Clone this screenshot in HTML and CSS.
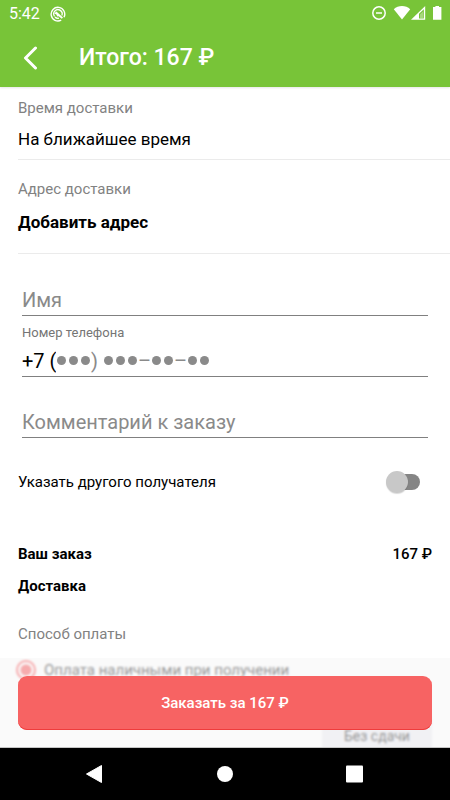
FILE: index.html
```html
<!DOCTYPE html>
<html lang="ru">
<head>
<meta charset="utf-8">
<meta name="viewport" content="width=device-width, initial-scale=1">
<title>Оформление заказа</title>
<link rel="stylesheet" href="styles.css">
</head>
<body>
<header class="top">
  <div class="status">
    <span class="clock">5:42</span>
    <svg class="status-app" width="16" height="16" viewBox="0 0 16 16" aria-hidden="true">
      <path d="M11.200 14.100A6.800 6.800 0 1 1 14 11.200" fill="none" stroke="#fff" stroke-width="1.400"/>
      <path d="M4.600 10.400A4.200 4.200 0 1 1 11.800 9.600" fill="none" stroke="#fff" stroke-width="1.300"/>
      <path d="M4.200 7.600 6.400 5.600 13 11.400 11.800 12.800 8.600 10.200 7.200 10.400 6.400 8.600z" fill="#fff"/>
      <path d="M5 11a4.200 4.200 0 0 0 4 1.200" fill="none" stroke="#fff" stroke-width="1.300"/>
    </svg>
    <svg class="status-system" width="71" height="16" viewBox="0 0 71 16" aria-hidden="true">
      <circle cx="8" cy="7" r="6.200" fill="none" stroke="#fff" stroke-width="1.500"/>
      <path d="M5 7h6" stroke="#fff" stroke-width="1.500"/>
      <path d="M22.800 3.200C27-1 35-1 39.200 3.200L31 13.400z" fill="#fff"/>
      <path d="M40 13.800 54.200 0v13.800z" fill="#fff"/>
      <path d="M48 7.800 52.800 3.200v9.200H48z" fill="#78c438"/>
      <path d="M49 8.200 52 5.400v6.800h-3z" fill="#fff" fill-opacity=".35"/>
      <path d="M62 1h2.400V0h3.600v1h2.400v12.800H62z" fill="#fff"/>
    </svg>
  </div>
  <div class="toolbar">
    <button class="back" type="button" aria-label="Назад">
      <svg width="16" height="24" viewBox="0 0 16 24" aria-hidden="true"><path d="M13.500 2 3.500 12l10 10" fill="none" stroke="#fff" stroke-width="3" stroke-linecap="round" stroke-linejoin="round"/></svg>
    </button>
    <h1 class="title">Итого: 167 ₽</h1>
  </div>
</header>

<form class="checkout">
  <main class="content">
    <section class="block block-time">
      <h2 class="caption">Время доставки</h2>
      <p class="value">На ближайшее время</p>
    </section>
    <section class="block block-address">
      <h2 class="caption">Адрес доставки</h2>
      <a class="value value-strong" href="#address">Добавить адрес</a>
    </section>

    <section class="fields">
      <div class="field">
        <input class="input" type="text" placeholder="Имя" aria-label="Имя">
      </div>
      <div class="field">
        <label class="field-label" for="phone">Номер телефона</label>
        <div class="input phone">
          <input class="phone-input" id="phone" type="tel" value="+7 (">
          <span class="mask"><span class="dots"><i></i><i></i><i></i></span>)<span class="dots dots-next"><i></i><i></i><i></i></span>–<span class="dots"><i></i><i></i></span>–<span class="dots"><i></i><i></i></span></span>
        </div>
      </div>
      <div class="field">
        <input class="input" type="text" placeholder="Комментарий к заказу" aria-label="Комментарий к заказу">
      </div>
    </section>

    <div class="recipient">
      <label for="recipient">Указать другого получателя</label>
      <input class="switch" id="recipient" type="checkbox" role="switch">
    </div>

    <dl class="summary">
      <div class="summary-row"><dt>Ваш заказ</dt><dd>167 ₽</dd></div>
      <div class="summary-row"><dt>Доставка</dt><dd></dd></div>
    </dl>

    <section class="payment">
      <h2 class="caption">Способ оплаты</h2>
      <label class="option"><input class="radio" type="radio" name="payment" checked>Оплата наличными при получении</label>
      <button class="chip" type="button">Без сдачи</button>
    </section>
  </main>
  <div class="dock">
    <button class="order" type="submit">Заказать за 167 ₽</button>
  </div>
</form>

<nav class="system-nav" aria-label="Системная навигация">
  <button type="button" aria-label="Назад"><svg width="20" height="20" viewBox="0 0 20 20"><path d="M1.500 10 16.500 1.500v17z" fill="#fff" stroke="#fff" stroke-linejoin="round"/></svg></button>
  <button type="button" aria-label="Домой"><svg width="20" height="20" viewBox="0 0 20 20"><circle cx="10" cy="10" r="8" fill="#fff"/></svg></button>
  <button type="button" aria-label="Обзор"><svg width="20" height="20" viewBox="0 0 20 20"><rect x="1" y="1.500" width="17" height="17" rx="1" fill="#fff"/></svg></button>
</nav>
</body>
</html>
```
FILE: styles.css
```css
* {
  box-sizing: border-box;
}

body {
  margin: 0;
  height: 100vh;
  display: flex;
  flex-direction: column;
  background: #fff;
  color: #000;
  font-family: Roboto, "Liberation Sans", sans-serif;
  font-size: 15px;
  line-height: 20px;
}

h1, h2, p, dl, dd {
  margin: 0;
}

button, input {
  font: inherit;
}

button {
  border: 0;
  padding: 0;
  background: none;
}

.top {
  background: #78c438;
  color: #fff;
  box-shadow: 0 1px 2px rgba(0, 0, 0, 0.1);
  z-index: 1;
}

.status {
  display: flex;
  align-items: center;
  height: 28px;
  padding: 0 8px 0 9px;
}

.clock {
  font-size: 16px;
}

.status-app {
  margin-left: 10px;
}

.status-system {
  margin-left: auto;
}

.toolbar {
  display: flex;
  align-items: center;
  height: 59px;
  padding-left: 22px;
}

.back {
  display: flex;
  margin-right: 41px;
}

.title {
  font-size: 23px;
  font-weight: 500;
  line-height: 28px;
}

.checkout {
  position: relative;
  flex: 1;
  min-height: 0;
  overflow: hidden;
}

.block {
  margin-left: 18px;
  border-bottom: 1px solid #ebebeb;
}

.block-time {
  padding: 11px 0 9px;
}

.block-address {
  padding: 19px 0 20px;
}

.caption {
  color: #828282;
  font-size: 15px;
  font-weight: 400;
  line-height: 20px;
}

.value {
  display: block;
  margin-top: 10px;
  color: #000;
  font-size: 17px;
  line-height: 22px;
  text-decoration: none;
}

.value-strong {
  margin-top: 12px;
  font-weight: 700;
}

.fields {
  padding: 1px 22px 0;
}

.field {
  display: flex;
  flex-direction: column;
  justify-content: flex-end;
  height: 61px;
}

.field-label {
  color: #757575;
  font-size: 13px;
  line-height: 16px;
}

.input {
  width: 100%;
  height: 36px;
  border: 0;
  border-bottom: 1px solid #808080;
  padding: 4px 0 0;
  background: none;
  color: #000;
  font-size: 20px;
  line-height: 24px;
  outline: 0;
}

.input::placeholder {
  color: #8a8a8a;
  opacity: 1;
}

.phone {
  display: flex;
  align-items: center;
}

.phone-input {
  width: 34px;
  border: 0;
  padding: 0;
  background: none;
  color: #000;
  outline: 0;
}

.mask {
  display: flex;
  align-items: center;
  color: #8a8a8a;
}

.dots {
  display: flex;
  gap: 3px;
  padding: 0 1px;
}

.dots-next {
  margin-left: 5px;
}

.dots i {
  width: 9px;
  height: 9px;
  border-radius: 50%;
  background: #8a8a8a;
}

.recipient {
  display: flex;
  align-items: center;
  justify-content: space-between;
  padding: 32px 30px 0 18px;
}

.switch {
  appearance: none;
  position: relative;
  width: 34px;
  height: 24px;
  margin: 0;
}

.switch::before {
  content: "";
  position: absolute;
  inset: 4px 0 4px 4px;
  border-radius: 8px;
  background: #858585;
}

.switch::after {
  content: "";
  position: absolute;
  top: 1px;
  left: 0;
  width: 22px;
  height: 22px;
  border-radius: 50%;
  background: #c8c8c8;
  box-shadow: 0 1px 1px rgba(0, 0, 0, 0.15);
}

.summary {
  display: flex;
  flex-direction: column;
  gap: 12px;
  padding: 50px 18px 0;
  font-weight: 700;
}

.summary-row {
  display: flex;
  justify-content: space-between;
}

.summary dd {
  font-weight: 500;
}

.payment {
  display: flex;
  flex-direction: column;
  padding: 28px 18px 0;
}

.option {
  display: flex;
  align-items: center;
  margin: 14px 0 0 -2px;
  gap: 8px;
  line-height: 24px;
}

.radio {
  appearance: none;
  width: 20px;
  height: 20px;
  margin: 0;
  border: 2px solid #f43b40;
  border-radius: 50%;
  background: radial-gradient(circle, #f43b40 5px, transparent 6px);
}

.chip {
  align-self: flex-end;
  width: 110px;
  height: 44px;
  margin-top: 32px;
  border-radius: 6px;
  background: #e8e8f0;
  color: #000;
  font-size: 14px;
}

.dock {
  position: absolute;
  inset: auto 0 0;
  height: 90px;
  padding: 18px 18px 17px;
  border-bottom: 1px solid #c4c4c4;
  background: rgba(246, 246, 246, 0.6);
  backdrop-filter: blur(1px);
}

.order {
  width: 100%;
  height: 100%;
  border-radius: 9px;
  background: #f76363;
  box-shadow: inset 0 -1px #ef3c3c;
  color: #fff;
  font-size: 15px;
  font-weight: 500;
}

.system-nav {
  display: flex;
  justify-content: center;
  align-items: center;
  gap: 110px;
  height: 52px;
  background: #000;
}

.system-nav button {
  display: flex;
}
```
